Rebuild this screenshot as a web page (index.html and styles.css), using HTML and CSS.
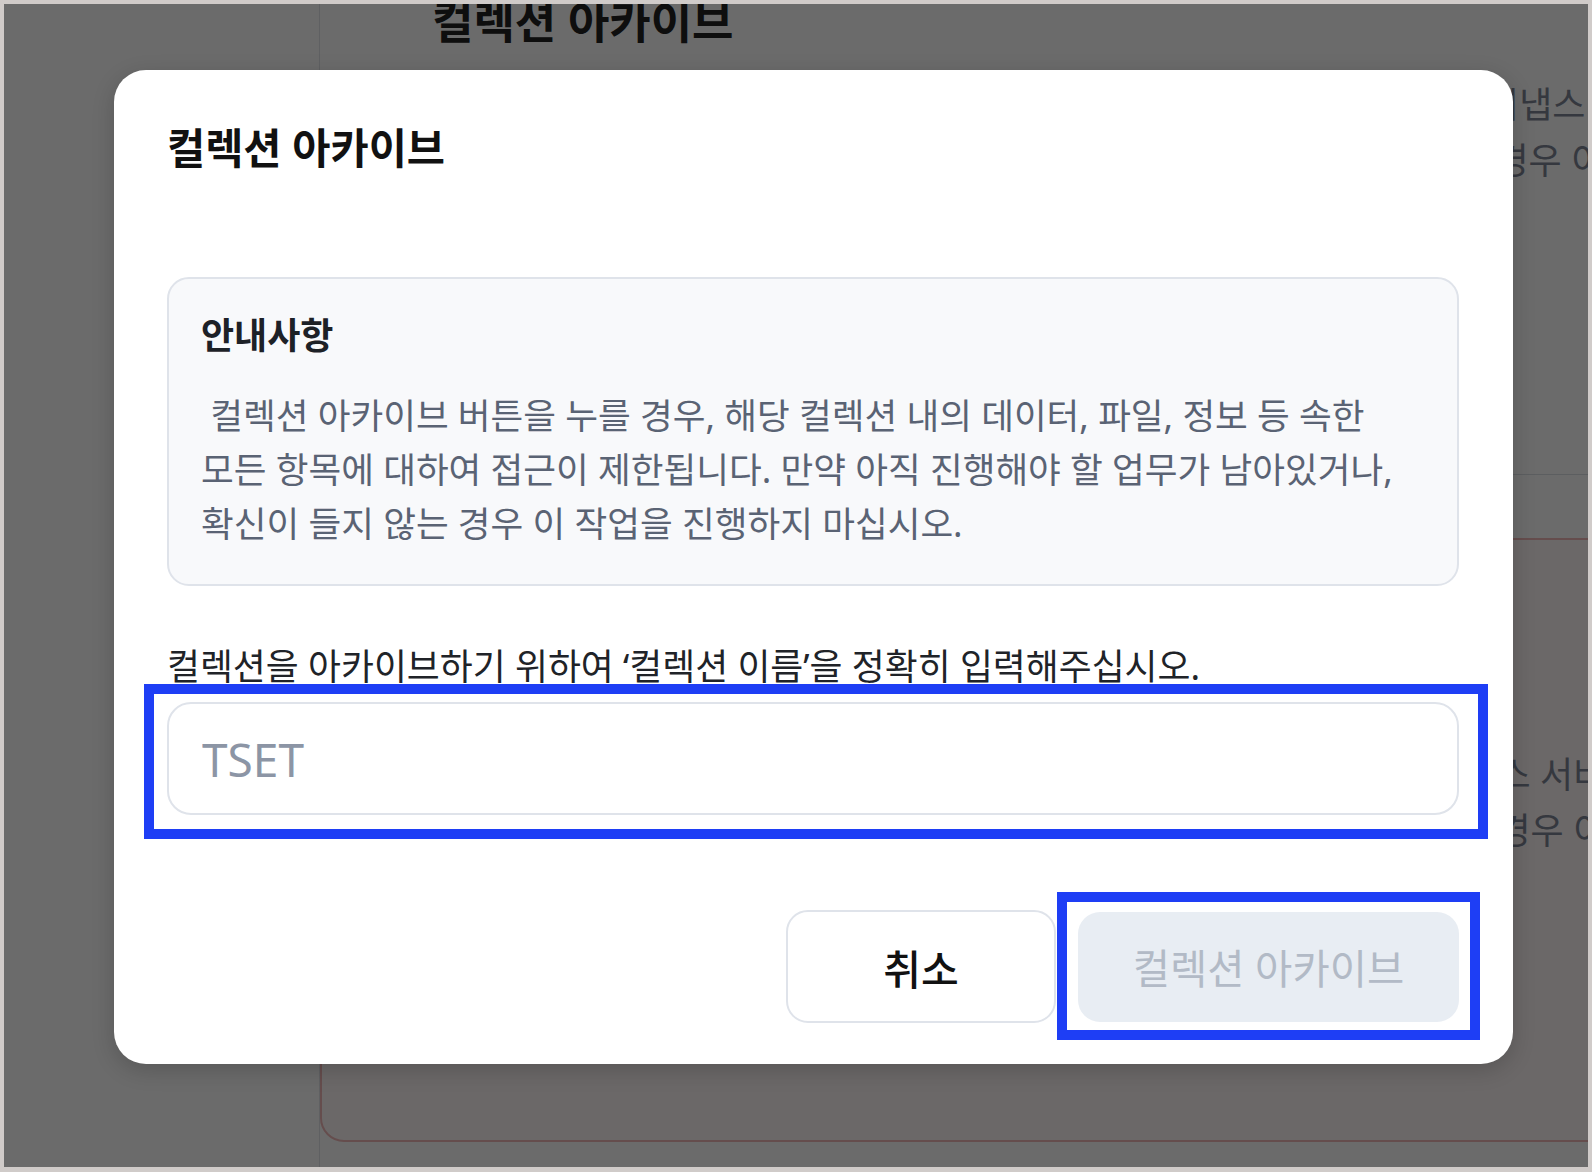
FILE: index.html
```html
<!DOCTYPE html>
<html lang="ko">
<head>
    <meta charset="UTF-8">
    <meta name="viewport" content="width=device-width, initial-scale=1.0">
    <title>컬렉션 아카이브</title>
    <link rel="stylesheet" href="styles.css">
</head>
<body>

<div class="frame">
    <!-- page behind the dialog -->
    <div class="app">
        <aside class="sidebar"></aside>
        <main class="content">
            <h1 class="page-title">컬렉션 아카이브</h1>
            <section class="page-section">
                <p class="page-text">컬렉션을 아카이브하면 해당 컬렉션의 데이터는 읽기전용으로 전환되며 시냅스 서비스와의 연결이 해제됩니다.</p>
                <p class="page-text">아카이브된 컬렉션은 복원요청 전까지 목록에 노출되지 않으며 필요하신 경우 이 페이지에서 복원할 수 있습니다.</p>
            </section>
            <section class="danger-card">
                <p class="page-text">아카이브를 진행하기 전에 컬렉션에 연결된 연동 설정과 예약작업을 시냅스 서비스에서 먼저 해제해 주십시오.</p>
                <p class="page-text">연동을 해제하지 않은 상태에서는 예약된 컬렉션의 아카이브를 진행하실 경우 이 작업은 실패할 수 있습니다.</p>
            </section>
        </main>
    </div>

    <div class="overlay">
        <div class="modal">
            <h2 class="modal-title">컬렉션 아카이브</h2>

            <div class="notice">
                <h3 class="notice-title">안내사항</h3>
                <p class="notice-text">&nbsp;컬렉션 아카이브 버튼을 누를 경우, 해당 컬렉션 내의 데이터, 파일, 정보 등 속한 모든 항목에 대하여 접근이 제한됩니다. 만약 아직 진행해야 할 업무가 남아있거나, 확신이 들지 않는 경우 이 작업을 진행하지 마십시오.</p>
            </div>

            <p class="confirm-label">컬렉션을 아카이브하기 위하여 ‘컬렉션 이름’을 정확히 입력해주십시오.</p>
            <div class="field highlight">
                <input type="text" class="field-input" placeholder="TSET">
            </div>

            <div class="actions">
                <button class="btn btn-cancel">취소</button>
                <div class="highlight highlight-btn">
                    <button class="btn btn-archive" disabled>컬렉션 아카이브</button>
                </div>
            </div>
        </div>
    </div>
</div>

</body>
</html>
```

FILE: styles.css
```css
html, body {
    margin: 0;
    padding: 0;
}
body {
    font-family: "Noto Sans", "Noto Sans CJK KR", sans-serif;
    word-break: keep-all;
    background-color: #d0cbc9;
}
.frame {
    position: relative;
    width: 1592px;
    height: 1172px;
    box-sizing: border-box;
    border: 4px solid #d0cbc9;
    border-bottom-width: 5px;
    background-color: #fff;
    overflow: hidden;
}

/* background page */
.app {
    display: flex;
    height: 100%;
}
.sidebar {
    width: 315px;
    flex-shrink: 0;
    border-right: 1px solid #e3e5e9;
}
.content {
    flex: 1;
    min-width: 0;
}
.page-title {
    margin: -3px 0 0;
    padding-left: 112px;
    font-size: 45px;
    line-height: 42px;
    font-weight: 700;
    color: #222;
}
.page-section {
    padding: 34px 0 285px 107px;
    border-bottom: 1px solid #dcdfe4;
}
.page-text {
    margin: 0;
    font-size: 36px;
    line-height: 56px;
    color: #7f8796;
    white-space: nowrap;
}
.danger-card {
    margin: 63px -60px 0 0;
    padding: 207px 0 281px 107px;
    border: 2px solid #f0b8b8;
    border-radius: 24px;
    background-color: #fff8f8;
}

/* dialog */
.overlay {
    position: absolute;
    inset: 0;
    box-sizing: border-box;
    padding: 66px 0 0 110px;
    background-color: rgba(0, 0, 0, 0.58);
}
.modal {
    width: 1399px;
    box-sizing: border-box;
    padding: 53px 54px 41px 53px;
    background-color: #fff;
    border-radius: 32px;
    box-shadow: 0 6px 22px rgba(0, 0, 0, 0.18);
}
.modal-title {
    margin: 0 0 104px;
    font-size: 41.5px;
    line-height: 50px;
    font-weight: 700;
    color: #111;
}
.notice {
    padding: 34px 25px 34px 32px;
    border: 2px solid #dfe3ea;
    border-radius: 22px;
    background-color: #f8f9fb;
}
.notice-title {
    margin: 0 0 29px;
    font-size: 36px;
    line-height: 46px;
    font-weight: 700;
    color: #1d2127;
}
.notice-text {
    margin: 0;
    font-size: 35.6px;
    line-height: 54px;
    color: #5a6374;
}
.confirm-label {
    margin: 57px 0 13px;
    font-size: 35.8px;
    line-height: 46px;
    color: #202328;
}
.field-input {
    display: block;
    width: 100%;
    height: 113px;
    box-sizing: border-box;
    padding: 0 33px;
    border: 2px solid #dfe3ea;
    border-radius: 24px;
    background-color: #fff;
    font-family: inherit;
    font-size: 46px;
    color: #8c95a5;
    outline: none;
}
.field-input::placeholder {
    color: #8c95a5;
}
.actions {
    display: flex;
    justify-content: flex-end;
    align-items: center;
    gap: 22px;
    margin-top: 95px;
}
.btn {
    display: block;
    font-family: inherit;
    border-radius: 22px;
    cursor: pointer;
}
.btn-cancel {
    width: 270px;
    height: 113px;
    border: 2px solid #dfe3ea;
    background-color: #fff;
    color: #111;
    font-size: 41px;
    font-weight: 500;
}
.btn-archive {
    width: 381px;
    height: 110px;
    border: none;
    background-color: #e8edf3;
    color: #b2bac6;
    font-size: 40.5px;
    cursor: default;
}

/* blue annotation boxes */
.highlight {
    position: relative;
}
.highlight::after {
    content: "";
    position: absolute;
    top: -18px;
    left: -23px;
    right: -29px;
    bottom: -24px;
    border: 10px solid #1e3ef5;
    pointer-events: none;
}
.highlight-btn {
    display: flex;
}
.highlight-btn::after {
    top: -20px;
    left: -21px;
    right: -21px;
    bottom: -18px;
}
```
